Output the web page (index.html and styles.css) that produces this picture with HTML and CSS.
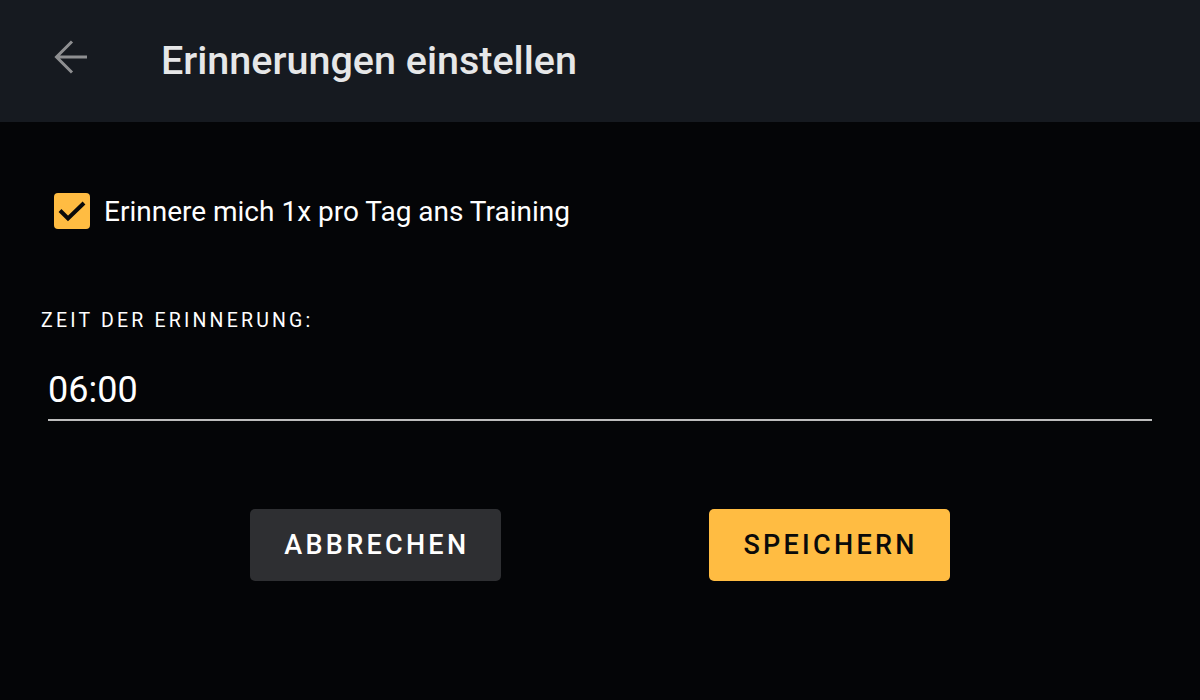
FILE: index.html
```html
<!DOCTYPE html>
<html lang="de">
<head>
<meta charset="utf-8">
<title>Erinnerungen einstellen</title>
<link rel="stylesheet" href="styles.css">
</head>
<body>
<header class="appbar">
  <button class="back" aria-label="Zurück">
    <svg width="36" height="36" viewBox="0 0 36 36"><path d="M3 18H34M19 2.5L3.5 18L19 33.5" fill="none" stroke="#8e8f91" stroke-width="3"/></svg>
  </button>
  <h1 class="title">Erinnerungen einstellen</h1>
</header>
<main class="content">
  <label class="check-row">
    <span class="checkbox">
      <svg width="36" height="36" viewBox="0 0 36 36"><path d="M6 17.5L14 25.5L30 10" fill="none" stroke="#0a0a0a" stroke-width="4"/></svg>
    </span>
    <span class="check-label">Erinnere mich 1x pro Tag ans Training</span>
  </label>
  <div class="field">
    <div class="field-label">ZEIT DER ERINNERUNG:</div>
    <div class="field-input">06:00</div>
  </div>
  <div class="actions">
    <button class="btn btn-cancel">ABBRECHEN</button>
    <button class="btn btn-save">SPEICHERN</button>
  </div>
</main>
</body>
</html>
```
FILE: styles.css
```css
* { box-sizing: border-box; }
html, body { margin: 0; padding: 0; }
body {
  background: #040507;
  font-family: Roboto, "Liberation Sans", sans-serif;
  color: #fff;
  width: 1200px;
  height: 700px;
  overflow: hidden;
}
.appbar {
  height: 122px;
  background: #161a20;
  display: flex;
  align-items: center;
}
.back {
  background: none;
  border: 0;
  padding: 0;
  margin-left: 53px;
  width: 36px;
  height: 36px;
  display: flex;
  margin-top: -8px;
}
.title {
  margin: -2px 0 0 72px;
  font-size: 39.5px;
  font-weight: 500;
  color: #e6e7e8;
}
.content {
  padding: 71px 48px 0 48px;
}
.check-row {
  display: flex;
  align-items: center;
  margin-left: 6px;
}
.checkbox {
  width: 36px;
  height: 36px;
  background: #ffbc42;
  border-radius: 4px;
  display: flex;
  flex: none;
}
.check-label {
  margin-left: 14px;
  font-size: 28px;
  color: #fff;
}
.field {
  margin-top: 80px;
}
.field-label {
  margin-left: -7px;
  font-size: 19.5px;
  letter-spacing: 3.2px;
  color: #fff;
}
.field-input {
  margin-top: 37px;
  font-size: 36px;
  padding-bottom: 8px;
  border-bottom: 2px solid #bdbdbd;
  line-height: 42px;
}
.actions {
  margin-top: 88px;
  display: flex;
  justify-content: center;
  gap: 208px;
}
.btn {
  height: 72px;
  border: 0;
  border-radius: 5px;
  font-family: Roboto, "Liberation Sans", sans-serif;
  font-size: 27px;
  font-weight: 500;
  letter-spacing: 3.3px;
  padding: 0 32px 0 34px;
}
.btn-cancel {
  background: #2e2f32;
  color: #fff;
}
.btn-save {
  background: #ffbc42;
  color: #0a0a0a;
}
```
